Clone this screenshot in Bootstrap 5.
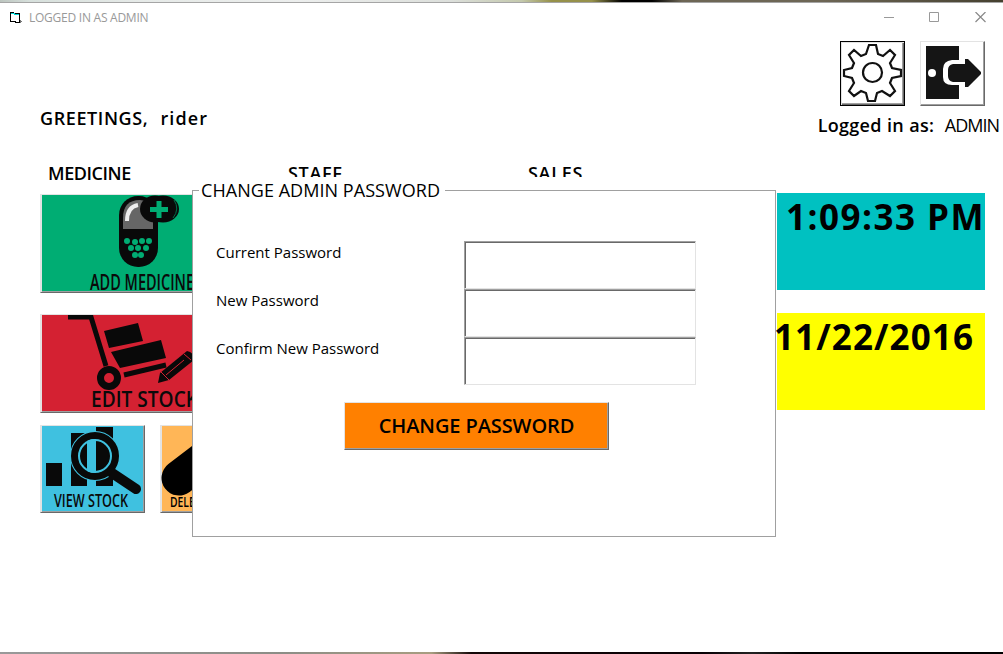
<!DOCTYPE html>
<html lang="en">
<head>
<meta charset="utf-8">
<meta name="viewport" content="width=device-width, initial-scale=1">
<title>Logged in as admin</title>
<link href="https://cdn.jsdelivr.net/npm/bootstrap@5.3.0/dist/css/bootstrap.min.css" rel="stylesheet">
<style>
body{width:1003px;height:654px;overflow:hidden;background:#fff;color:#000;font-family:"Open Sans",sans-serif;line-height:1}
.desk-top{height:3px;background:linear-gradient(90deg,#bcc5bf,#d7e0dc 3%,#e6eae8 14%,#eceeed 30%,#dcdfdb 45%,#c4c9ad 52%,#96914a 55%,#96914a 59%,#000 62%,#000 65%,#6d6655 68%,#6d6655 82%,#45402f);border-bottom:1px solid #a5a5a5}
.desk-bottom{height:2px;background:linear-gradient(90deg,#999 0,#8c8d86 28%,#a89d80 43%,#140808 47%,#080004 70%,#222 75%,#000 80%)}
.titlebar{height:28px;padding-left:9px;color:#999;font-size:12px}
.titlebar .caption{letter-spacing:-.25px;margin-left:7px;padding-top:1px}
.winbtns{gap:35px;padding-right:17px}
.top-area{height:131px;padding:10px 5px 0 40px}
.tre{font-family:"Open Sans",sans-serif;font-weight:600;font-size:18px;white-space:pre}
.greet{margin-top:68px;letter-spacing:.6px;word-spacing:.8px}
.greet span{letter-spacing:1.1px}
.iconbtn{width:65px;height:65px;border:1px solid;border-color:#e3e3e3 #696969 #696969 #e3e3e3;box-shadow:inset -1px -1px #a0a0a0;background:#fff}
.iconbtn.focus-on{border:1px solid #000;box-shadow:inset 1px 1px #e3e3e3,inset -1px -1px #696969,inset -2px -2px #a0a0a0}
.icons{gap:15px;padding-right:13px}
.who{margin-top:10px;letter-spacing:.25px;word-spacing:.4px}
.who span{letter-spacing:-1px;margin-right:-1px}
.grid-area{padding-left:40px;padding-right:18px}
.heads{height:32px;padding:2px 0 0 8px}
.heads span{width:240px;letter-spacing:.7px}
.heads span:first-child{letter-spacing:-.45px}
.tile{border:1px solid;border-color:#e3e3e3 #696969 #696969 #e3e3e3;box-shadow:inset 1px 0 #e3e3e3,inset -1px -1px #a0a0a0}
.tile svg,.iconbtn svg{display:block}
.tile text{font-weight:600}
.wide{width:225px;height:99px}
.half{width:105px;height:88px}
.stock{margin-top:21px}
.small-tiles{gap:15px;margin-top:12px}
.clocks{gap:23px;margin-top:-1px}
.clock{width:208px;height:97px;font-weight:700;font-size:35px;white-space:pre;font-family:"Open Sans",sans-serif;line-height:47px;letter-spacing:1.5px}
.panel{position:absolute;left:192px;top:177px;width:584px;height:360px;background:#fff}
.panel fieldset{margin-top:13px;height:347px;border:1px solid #a0a0a0}
.panel legend{position:absolute;left:7px;top:3px;width:246px;height:20px;background:#fff;font-size:18px;line-height:20px;padding-left:2px;margin:0;float:none;white-space:nowrap;letter-spacing:.05px}
.fields{padding:50px 79px 0 23px}
.fieldrow{height:48px}
.fieldrow label{font-size:15px;font-family:"Open Sans",sans-serif;padding-top:4px}
.fieldrow input{width:232px;height:48px;border:1px solid;border-color:#a0a0a0 #e3e3e3 #e3e3e3 #a0a0a0;border-radius:0;box-shadow:inset 1px 1px #696969;padding:4px}
.go{width:265px;height:48px;margin:17px 0 0 151px;background:#ff8000;border:1px solid;border-color:#e3e3e3 #696969 #696969 #e3e3e3;box-shadow:inset -1px -1px #a0a0a0;font-weight:600;font-size:20px;padding:0;color:#000;letter-spacing:-.1px}
</style>
</head>
<body class="d-flex flex-column position-relative">
<div class="desk-top flex-shrink-0"></div>
<header class="titlebar d-flex align-items-center flex-shrink-0">
  <svg width="13" height="13" viewBox="0 0 13 13" shape-rendering="crispEdges"><path d="M1.500 1.500h3v1h6v9h-4v-1h-5z" fill="#fff" stroke="#000"/><path d="M2 2.500h3v1h5" stroke="#00d8d8" fill="none"/><path d="M11 9h1v1h1v1h-1v1h-1z" fill="#777"/></svg>
  <span class="caption">LOGGED IN AS ADMIN</span>
  <div class="winbtns d-flex ms-auto align-items-center">
    <svg width="11" height="11"><path d="M1 5.500h10" stroke="#999"/></svg>
    <svg width="11" height="11"><path d="M.5.5h9v9h-9z" stroke="#999" fill="none"/></svg>
    <svg width="11" height="11"><path d="M.5 0l10 10m0-10l-10 10" stroke="#888" stroke-width="1.200"/></svg>
  </div>
</header>
<section class="top-area d-flex justify-content-between flex-shrink-0">
  <div class="tre greet">GREETINGS,  <span>rider</span></div>
  <div>
    <div class="icons d-flex justify-content-end">
      <div class="iconbtn focus-on"><svg width="63" height="63" viewBox="0 0 63 63"><g fill="none" stroke="#111" stroke-width="2.200"><path d="M28 3h7l2 9 5 2 7-6 5 5-5 8 2 5 9 2v6l-9 2-2 5 5 8-5 5-8-5-5 2-2 8h-7l-2-8-5-2-7 5-5-5 5-8-2-5-8-2v-6l8-2 2-5-5-8 5-5 7 6 5-2z"/><circle cx="31.500" cy="30.500" r="9.500"/></g></svg></div>
      <div class="iconbtn"><svg width="63" height="63" viewBox="0 0 63 63"><path d="M5 4h33v14h-7q-9 1-9 9v8q0 8 9 8h7v14H5z" fill="#151515"/><circle cx="11" cy="31" r="4" fill="#fff"/><path d="M32 22h12v-5h3l13 13v2L47 45h-3v-5H32q-5-1-5-6v-6q0-5 5-6z" fill="#151515"/></svg></div>
    </div>
    <div class="tre who">Logged in as:  <span class="fw-normal">ADMIN</span></div>
  </div>
</section>
<main class="grid-area flex-grow-1">
  <div class="heads d-flex tre"><span>MEDICINE</span><span>STAFF</span><span>SALES</span></div>
  <div class="d-flex justify-content-between">
    <div>
      <div class="tile wide" style="background:#00ad73"><svg width="223" height="97" viewBox="0 0 223 97"><rect x="78" y="1" width="39" height="71" rx="19" fill="#090909"/><path d="M82 34V23q0-18 17-18 13 1 13 16v13z" fill="#666"/><path d="M86 26q0-14 11-16" stroke="#eee" stroke-width="4" fill="none"/><ellipse cx="122" cy="14" rx="16" ry="13.500" fill="#090909"/><ellipse cx="114" cy="14" rx="15" ry="13.500" fill="#090909"/><path d="M133 5q6 9-1 18" fill="none" stroke="#00704a"/><path d="M118 6v17m-9-8.500h18" stroke="#00ad73" stroke-width="5"/><g fill="#00ad73"><circle cx="86" cy="46" r="3"/><circle cx="94" cy="47" r="3"/><circle cx="101" cy="46" r="3"/><circle cx="108" cy="46" r="3"/><circle cx="90" cy="53" r="3"/><circle cx="97" cy="53" r="3"/><circle cx="105" cy="53" r="3"/><circle cx="94" cy="60" r="3"/><circle cx="100" cy="60" r="3"/></g><text x="49" y="95" font-size="22" textLength="104" lengthAdjust="spacingAndGlyphs" fill="#0a0a0a">ADD MEDICINE</text></svg></div>
      <div class="tile wide stock" style="background:#d42132"><svg width="223" height="97" viewBox="0 0 223 97"><path d="M27 2h23l15 49" stroke="#090909" stroke-width="5" fill="none"/><path d="M63 16l34-8 5 18-34 7zM70 37l50-12 5 18-46 10z" fill="#090909"/><path d="M83 60l42-10" stroke="#090909" stroke-width="5"/><circle cx="68" cy="63" r="8.500" stroke="#090909" stroke-width="7" fill="none"/><path d="M119 58l27-22q7 1 7 9l-25 20-11 3z" fill="#090909"/><path d="M120 57l8 8m15-26l7 6M125 60l18-15" stroke="#d42132"/><text x="50" y="92" font-size="21" textLength="107" lengthAdjust="spacingAndGlyphs" fill="#0a0a0a">EDIT STOCK</text></svg></div>
      <div class="small-tiles d-flex">
        <div class="tile half" style="background:#3fc1e0"><svg width="103" height="86" viewBox="0 0 103 86"><path d="M5 37h16v23H5zM30 7h16v53H30zM55 1h17v59H55z" fill="#090909"/><circle cx="54" cy="30" r="23" fill="none" stroke="#3fc1e0" stroke-width="4"/><circle cx="54" cy="30" r="20.500" fill="none" stroke="#090909" stroke-width="7"/><circle cx="54" cy="30" r="16" fill="none" stroke="#3fc1e0" stroke-width="2"/><path d="M71 47l24 16" stroke="#090909" stroke-width="10" stroke-linecap="round"/><text x="13" y="81" font-size="18" textLength="74" lengthAdjust="spacingAndGlyphs" fill="#0a0a0a">VIEW STOCK</text></svg></div>
        <div class="tile half" style="background:#ffb657"><svg width="103" height="86" viewBox="0 0 103 86"><path d="M18 52L60 20" stroke="#000" stroke-width="35" stroke-linecap="round"/><text x="9" y="81" font-size="14" textLength="72" lengthAdjust="spacingAndGlyphs">DELETE STOCK</text></svg></div>
      </div>
    </div>
    <div class="clocks d-flex flex-column">
      <div class="clock" style="background:#00c1c1;padding-left:9px">1:09:33 PM</div>
      <div class="clock" style="background:#ff0;text-indent:-3px;letter-spacing:1.1px">11/22/2016</div>
    </div>
  </div>
</main>
<div class="desk-bottom flex-shrink-0"></div>

<form class="panel">
  <fieldset>
    <legend>CHANGE ADMIN PASSWORD</legend>
    <div class="fields">
      <div class="fieldrow d-flex justify-content-between"><label for="p1">Current Password</label><input id="p1" type="password"></div>
      <div class="fieldrow d-flex justify-content-between"><label for="p2">New Password</label><input id="p2" type="password"></div>
      <div class="fieldrow d-flex justify-content-between"><label for="p3">Confirm New Password</label><input id="p3" type="password"></div>
    </div>
    <button type="button" class="go btn rounded-0 d-block">CHANGE PASSWORD</button>
  </fieldset>
</form>
<script src="https://cdn.jsdelivr.net/npm/bootstrap@5.3.0/dist/js/bootstrap.bundle.min.js"></script>
</body>
</html>
